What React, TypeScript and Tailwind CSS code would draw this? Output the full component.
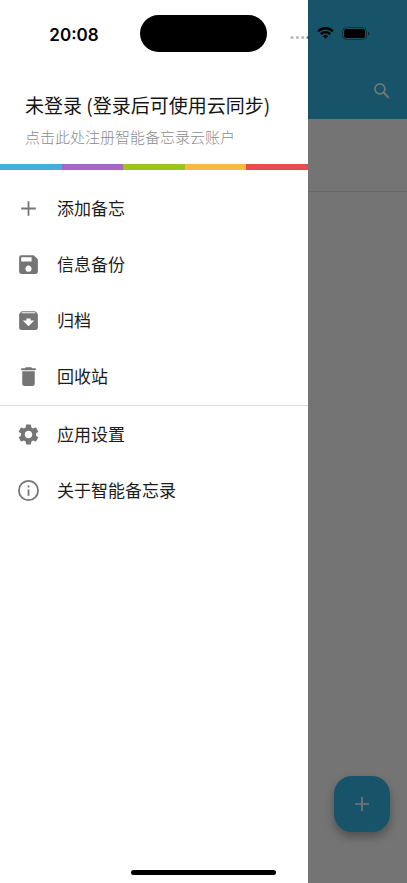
import type { ReactNode } from "react";
import { MdArchive, MdDelete, MdSave, MdSettings } from "react-icons/md";

interface MenuEntry {
  label: string;
  icon: ReactNode;
}

const iconProps = { className: "size-[25px] shrink-0 text-[#757575]" };

function PlusIcon({ className }: { className?: string }) {
  return (
    <svg viewBox="0 0 24 24" fill="none" stroke="currentColor" strokeWidth="1.7" className={className}>
      <path d="M12 5v14M5 12h14" />
    </svg>
  );
}

function InfoIcon({ className }: { className?: string }) {
  return (
    <svg viewBox="0 0 24 24" fill="none" stroke="currentColor" strokeWidth="1.7" className={className}>
      <circle cx="12" cy="12" r="9.2" />
      <path d="M12 11v6M12 7.2v1.8" />
    </svg>
  );
}

function SearchIcon({ className }: { className?: string }) {
  return (
    <svg viewBox="0 0 24 24" fill="none" stroke="currentColor" strokeWidth="2" className={className}>
      <circle cx="9.5" cy="9.5" r="6" />
      <path d="M13.8 13.8l6.400 6.400" strokeWidth="2.300" />
    </svg>
  );
}

const noteEntries: MenuEntry[] = [
  { label: "添加备忘", icon: <PlusIcon {...iconProps} /> },
  { label: "信息备份", icon: <MdSave {...iconProps} /> },
  { label: "归档", icon: <MdArchive {...iconProps} /> },
  { label: "回收站", icon: <MdDelete {...iconProps} /> },
];

const appEntries: MenuEntry[] = [
  { label: "应用设置", icon: <MdSettings {...iconProps} /> },
  { label: "关于智能备忘录", icon: <InfoIcon {...iconProps} /> },
];

const stripes = ["bg-[#41aedb]", "bg-[#a866c4]", "bg-[#9bc41c]", "bg-[#f5b944]", "bg-[#ea4b4c]"];

function MenuList({ entries }: { entries: MenuEntry[] }) {
  return (
    <ul>
      {entries.map((entry) => (
        <li key={entry.label}>
          <button type="button" className="flex h-14 w-full items-center gap-4 px-4 text-left text-[17px] leading-6 text-[#1c1c1c]">
            {entry.icon}
            <span>{entry.label}</span>
          </button>
        </li>
      ))}
    </ul>
  );
}

function StatusBar() {
  return (
    <div className="pointer-events-none absolute inset-x-0 top-0 z-30 flex h-[66px] items-center text-black">
      <div className="flex-1 pt-1 pr-2 pl-4 text-center font-['Inter'] text-[17px] leading-5 font-semibold">20:08</div>
      <div className="h-[37px] w-[127px] rounded-full bg-black" />
      <div className="flex flex-1 items-center justify-center gap-2 pr-5 pl-1">
        <svg width="20" height="14" viewBox="0 0 20 14" fill="#8a8a8a" fillOpacity="0.6">
          <circle cx="3" cy="11.5" r="1.6" />
          <circle cx="8.4" cy="11.5" r="1.6" />
          <circle cx="13.8" cy="11.5" r="1.6" />
          <circle cx="19" cy="11.5" r="1.6" fill="#0c3443" />
        </svg>
        <svg width="17" height="12" viewBox="0 0 17 12" fill="black">
          <path d="M8.5 2.5c2.4 0 4.6.9 6.3 2.5.1.1.3.1.4 0l1.2-1.3c.2-.1.2-.3 0-.5C14.3 1.2 11.5 0 8.5 0S2.7 1.2.6 3.2c-.2.2-.2.4 0 .5L1.8 5c.1.1.3.1.4 0 1.7-1.6 3.9-2.500 6.3-2.5z" />
          <path d="M8.5 6.5c1.3 0 2.6.5 3.6 1.4.1.1.3.1.4 0l1.3-1.3c.1-.1.1-.3 0-.5-1.5-1.3-3.3-2.1-5.3-2.1s-3.9.8-5.3 2.1c-.1.2-.1.4 0 .5l1.3 1.3c.1.1.3.1.4 0 1-.9 2.3-1.4 3.6-1.4z" />
          <path d="M11 9.3c.1-.1.1-.3 0-.4C10.3 8.3 9.4 8 8.5 8s-1.8.3-2.5.9c-.1.1-.1.3 0 .4l2.3 2.3c.1.1.3.1.4 0z" />
        </svg>
        <svg width="28" height="13" viewBox="0 0 28 13">
          <rect x="0.5" y="0.5" width="24" height="12" rx="4" fill="none" stroke="black" strokeOpacity="0.4" />
          <rect x="2" y="2" width="21" height="9" rx="2.5" fill="black" />
          <path d="M26 4.5v4c.8-.3 1.4-1.1 1.4-2s-.6-1.7-1.4-2z" fill="black" fillOpacity="0.5" />
        </svg>
      </div>
    </div>
  );
}

function Drawer() {
  return (
    <aside className="absolute inset-y-0 left-0 z-20 w-[308px] bg-white">
      <button type="button" className="flex h-[164px] w-full flex-col justify-end gap-2.5 px-[25px] pb-[17px] text-left whitespace-nowrap">
        <span className="text-[19px] leading-6 text-[#141414]">未登录 (登录后可使用云同步)</span>
        <span className="text-[15px] leading-5 font-light text-[#8c8c8c]">点击此处注册智能备忘录云账户</span>
      </button>
      <div className="flex h-[6px]">
        {stripes.map((color) => (
          <div key={color} className={`flex-1 ${color}`} />
        ))}
      </div>
      <nav className="pt-[10px]">
        <MenuList entries={noteEntries} />
        <hr className="mt-px border-[#dcdcdc]" />
        <MenuList entries={appEntries} />
      </nav>
    </aside>
  );
}

export default function App() {
  return (
    <div className="relative flex min-h-screen w-full flex-col overflow-hidden bg-[#fcfcfc] font-['Noto_Sans_CJK_SC',sans-serif]">
      <StatusBar />

      {/* Notes page behind the drawer */}
      <header className="flex h-[119px] items-end justify-end bg-[#36b7e4] px-[11px] pb-3.5">
        <button type="button" aria-label="搜索" className="p-1 text-white">
          <SearchIcon className="size-5" />
        </button>
      </header>
      <main className="flex flex-1 flex-col">
        <div className="h-[73px] border-b border-[#e0e0e0]" />
        <div className="mt-auto flex justify-end px-[17px] pb-[51px]">
          <button type="button" aria-label="添加" className="flex size-14 items-center justify-center rounded-[18px] bg-[#36b7e4] text-white shadow-[0_5px_10px_rgba(0,0,0,0.3)]">
            <PlusIcon className="size-6" />
          </button>
        </div>
      </main>

      <div className="absolute inset-0 z-10 bg-black/54" />
      <Drawer />

      {/* Home indicator */}
      <div className="pointer-events-none absolute inset-x-0 bottom-2 z-30 flex justify-center">
        <div className="h-[5px] w-[145px] rounded-full bg-black" />
      </div>
    </div>
  );
}
